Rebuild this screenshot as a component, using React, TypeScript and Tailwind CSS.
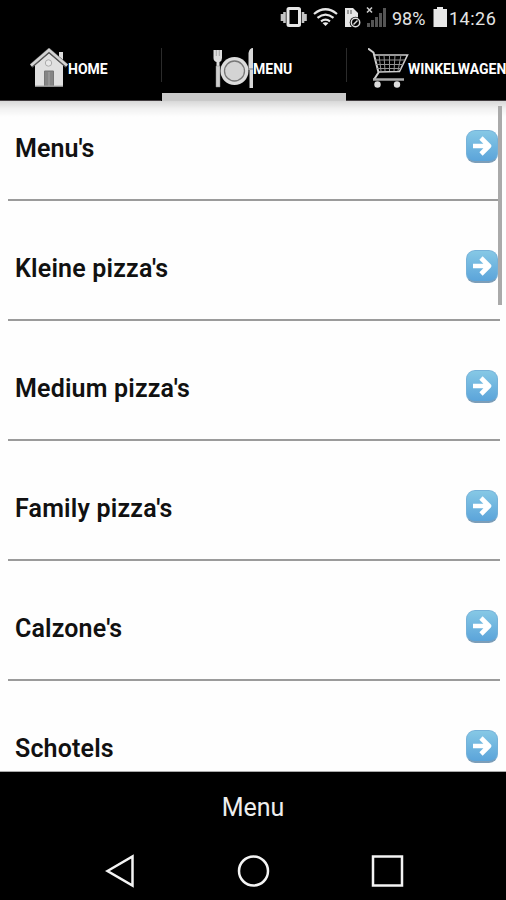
import React from "react";

const categories = [
  { name: "Menu's", spacing: "tracking-[0.05px]" },
  { name: "Kleine pizza's", spacing: "tracking-[0.2px]" },
  { name: "Medium pizza's", spacing: "tracking-[0.18px]" },
  { name: "Family pizza's", spacing: "tracking-[0.2px]" },
  { name: "Calzone's", spacing: "tracking-[0.15px]" },
  { name: "Schotels", spacing: "tracking-[0.15px]" },
];

function StatusBar() {
  return (
    <div className="flex h-9 shrink-0 items-center text-[18px] text-[#e4e4e4]">
      <svg className="ml-[280px] h-9 w-[110px] shrink-0" viewBox="280 0 110 36">
        <rect x="288" y="8.5" width="11.5" height="17" rx="1" fill="none" stroke="#e6e6e6" strokeWidth="3" />
        <path d="M284.5 12v11M282 14v7M303 12v11M305.500 14v7" stroke="#c4c4c4" strokeWidth="2.600" />
        <g fill="none" stroke="#e6e6e6" strokeWidth="2.2">
          <path d="M314 14q11.5-9.5 23 0" />
          <path d="M317.500 17.800q8-6.500 16 0" />
          <path d="M321 21.300q4.500-3.500 9 0" />
        </g>
        <path d="M322.500 23q3-1.500 6 0l-3 3z" fill="#eee" />
        <path d="M345 8h8l5 5v14h-13z" fill="#e6e6e6" />
        <path d="M348 10v4M351 10v4" stroke="#555" strokeWidth="1" />
        <circle cx="355.500" cy="22.500" r="5.800" fill="#000" />
        <circle cx="355.500" cy="22.500" r="4.200" fill="none" stroke="#ddd" strokeWidth="1.500" />
        <path d="m357.500 20.500-4 4" stroke="#ddd" strokeWidth="1.500" />
        <path d="m367 7.500 5 5m0-5-5 5" stroke="#ccc" strokeWidth="1.600" />
        <path d="M368.500 27v-4M372.500 27v-7M376.500 27V17M380.500 27V13M384.500 27V8" stroke="#555" strokeWidth="3" />
      </svg>
      <span className="ml-[2px] w-[41px] whitespace-nowrap">98%</span>
      <svg className="h-9 w-[15px] shrink-0" viewBox="431 0 15 36">
        <path d="M431.500 9h3.500V7h6v2h4v18h-13.500V9z" fill="#e8e8e8" />
      </svg>
      <span className="ml-px whitespace-nowrap tracking-[0.5px]">14:26</span>
    </div>
  );
}

function HomeIcon() {
  return (
    <svg className="h-10 w-[38px] shrink-0" viewBox="30 48 38 40">
      <path d="M59 52h4v10h-4z" fill="#ddd" />
      <path d="M35 65 49 53l14 12v21.500H35z" fill="#e0e0e0" />
      <path d="M31 66 49 50.500 67 66" fill="none" stroke="#555" strokeWidth="4.500" />
      <path d="M31 65.500 49 50 67 65.500" fill="none" stroke="#d4d4d4" strokeWidth="2.600" />
      <circle cx="48.500" cy="63" r="3.200" fill="#e8e8e8" stroke="#aaa" />
      <path d="M44.500 71h9v15h-9z" fill="#858585" stroke="#777" />
      <path d="M49 72v14" stroke="#a5a5a5" />
      <path d="M35 86h28" stroke="#aaa" />
    </svg>
  );
}

function PlateIcon() {
  return (
    <svg className="h-10 w-[41px] shrink-0" viewBox="213 48 41 40">
      <path d="M213.500 50h8.500v8q0 3-2.500 4v4h-3v-4q-3-1-3-4z" fill="#ddd" />
      <path d="M216.300 50v6M219.300 50v6" stroke="#999" strokeWidth=".8" />
      <path d="M216 66h4v21h-4z" fill="#cfcfcf" stroke="#888" strokeWidth=".5" />
      <circle cx="234.500" cy="71" r="14" fill="#dcdcdc" />
      <circle cx="234.500" cy="71" r="10" fill="#d4d4d4" stroke="#777" strokeWidth="1.300" />
      <path d="M253 48v40h-3.500V70h-1V53q1-5 4.500-5z" fill="#d8d8d8" />
      <path d="M249 69h4" stroke="#777" />
    </svg>
  );
}

function CartIcon() {
  return (
    <svg className="h-10 w-[41px] shrink-0" viewBox="368 48 41 40" fill="none">
      <path d="m368 48.500 5.500 4 5 20-4.500 7" stroke="#d0d0d0" strokeWidth="2" />
      <path d="M374 55h33.500l-8 16.500-21 .5" stroke="#ccc" strokeWidth="1.600" />
      <path d="M375 60h30M376 64.500h27M377 68.500h24M379 55l2 16M384 55l1 16M389.500 55v16M395 55l-1 16M401 55l-3 16" stroke="#929292" />
      <path d="M373 79.500h31" stroke="#aaa" strokeWidth="2.500" />
      <circle cx="377.500" cy="84.500" r="3.200" fill="#ddd" />
      <circle cx="397" cy="84.500" r="3.200" fill="#ddd" />
    </svg>
  );
}

function Tabs() {
  return (
    <nav className="flex h-[65px] shrink-0 overflow-hidden text-[14px] font-bold text-white">
      <div className="flex w-[161px] shrink-0 border-b border-[#423d40] pt-3 pl-[30px]">
        <HomeIcon />
        <span className="mt-[11px] h-5 leading-5">HOME</span>
      </div>
      <div className="flex w-[185px] shrink-0 flex-col">
        <div className="flex h-[57px] pt-3">
          <div className="h-[34px] w-px shrink-0 bg-[#2b2b2b]" />
          <div className="ml-[51px] flex">
            <PlateIcon />
            <span className="-ml-px mt-[11px] h-5 leading-5">MENU</span>
          </div>
        </div>
        <div className="ml-px h-2 bg-[#cacaca]" />
      </div>
      <div className="flex w-[184px] shrink-0 border-b border-[#423d40] pt-3">
        <div className="h-[34px] w-px shrink-0 bg-[#2b2b2b]" />
        <div className="ml-[21px] flex">
          <CartIcon />
          <span className="-ml-px mt-[11px] h-5 leading-5">WINKELWAGEN</span>
        </div>
      </div>
    </nav>
  );
}

function ArrowButton() {
  return (
    <div className="mt-[49px] flex h-[33px] w-8 items-center justify-center rounded-[9px] border border-b-2 border-[#76b2d9] border-b-[#7c9eb9] bg-linear-to-b from-[#86c8e5] to-[#5ba4da]">
      <svg className="h-5 w-5" viewBox="0 0 20 20" fill="none" stroke="white" strokeWidth="4.600" strokeLinejoin="round">
        <path d="M1 10h15M9 2l8 8-8 8" />
      </svg>
    </div>
  );
}

export default function App() {
  return (
    <div className="flex h-[900px] w-[506px] flex-col overflow-hidden bg-black font-['Roboto',sans-serif]">
      <StatusBar />
      <Tabs />
      <main className="relative h-[671px] shrink-0 overflow-hidden bg-[#fefefe]">
        <div className="-mt-[20px] px-2 pr-[6px]">
          {categories.map((c) => (
            <div key={c.name} className="flex h-[120px] justify-between border-b-2 border-[#9b9b9b] pr-[2px] pl-[7px]">
              <span className={`mt-[52px] h-8 text-[25px] leading-8 font-semibold text-[#111] ${c.spacing}`}>{c.name}</span>
              <ArrowButton />
            </div>
          ))}
        </div>
        <div className="absolute inset-x-0 top-0 h-4 bg-linear-to-b from-black/15 via-black/5 to-transparent" />
        <div className="absolute top-[5px] right-1 h-[199px] w-1 bg-[#aaa]" />
        <div className="absolute inset-x-0 bottom-0 h-px bg-[#aaa]" />
      </main>
      <footer className="flex h-[128px] shrink-0 flex-col">
        <div className="flex h-[71px] items-center justify-center text-[25px] text-[#eee]">Menu</div>
        <svg className="h-[57px] w-full" viewBox="0 843 506 57" fill="none" stroke="#f4f4f4" strokeWidth="2.500">
          <path d="m107.500 871 25-14.500v29z" />
          <circle cx="253.500" cy="871" r="14.500" />
          <rect x="373" y="856.500" width="29" height="29" />
        </svg>
      </footer>
    </div>
  );
}
